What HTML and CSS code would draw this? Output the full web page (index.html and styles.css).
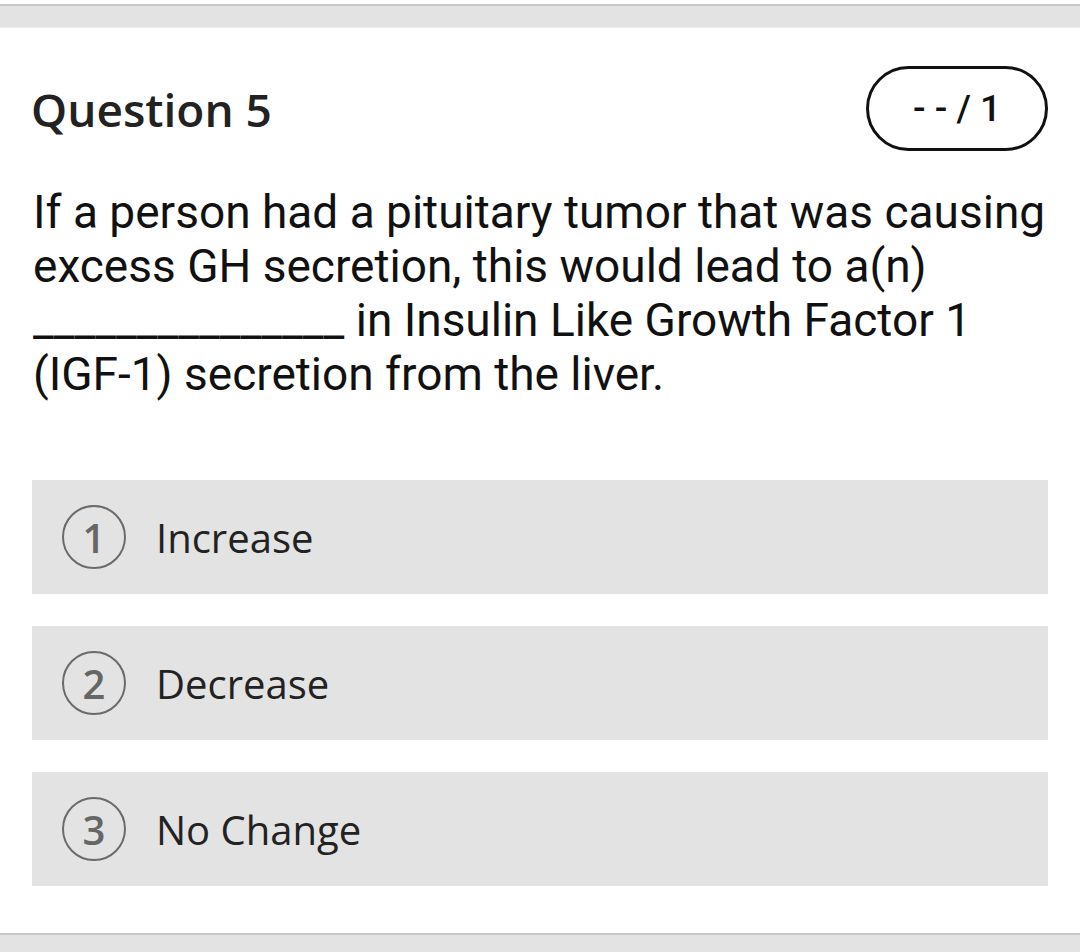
FILE: index.html
```html
<!DOCTYPE html>
<html lang="en">
<head>
  <meta charset="UTF-8">
  <title>Question 5</title>
  <link rel="stylesheet" href="styles.css">
</head>
<body>
  <div class="top-bar"></div>

  <div class="question">
    <div class="question-head">
      <h2 class="question-title">Question 5</h2>
      <div class="score">- - / 1</div>
    </div>

    <p class="question-text">If a person had a pituitary tumor that was causing excess GH secretion, this would lead to a(n) _______________ in Insulin Like Growth Factor 1 (IGF-1) secretion from the liver.</p>

    <div class="options">
      <div class="option">
        <span class="option-num">1</span>
        <span class="option-label">Increase</span>
      </div>
      <div class="option">
        <span class="option-num">2</span>
        <span class="option-label">Decrease</span>
      </div>
      <div class="option">
        <span class="option-num">3</span>
        <span class="option-label">No Change</span>
      </div>
    </div>
  </div>

  <div class="bottom-bar"></div>
</body>
</html>
```

FILE: styles.css
```css
body {
  margin: 0;
  background: #ffffff;
  color: #222222;
  font-family: 'Open Sans', sans-serif;
  width: 1080px;
  height: 952px;
  overflow: hidden;
}
.top-bar {
  margin-top: 4px;
  height: 21px;
  background: #e3e3e3;
  border-top: 2px solid #c8c8c8;
  border-bottom: 1px solid #ececec;
}
.question {
  padding: 38px 32px 0 32px;
}
.question-head {
  display: flex;
  justify-content: space-between;
  align-items: center;
}
.question-title {
  margin: 0 0 0 -1px;
  font-size: 46px;
  font-weight: 600;
  color: #222222;
}
.score {
  width: 176px;
  height: 79px;
  box-sizing: content-box;
  border: 3px solid #111111;
  border-radius: 50px;
  display: flex;
  align-items: center;
  justify-content: center;
  font-family: Roboto, sans-serif;
  font-size: 37px;
  font-weight: 500;
  color: #111111;
}
.question-text {
  margin: 34px 0 0 1px;
  font-family: Roboto, sans-serif;
  font-size: 46px;
  line-height: 54px;
  color: #111111;
}
.options {
  margin-top: 79px;
  display: flex;
  flex-direction: column;
  gap: 32px;
}
.option {
  height: 114px;
  background: #e3e3e3;
  display: flex;
  align-items: center;
  padding-left: 30px;
}
.option-num {
  width: 60px;
  height: 60px;
  border: 2px solid #6a6a6a;
  border-radius: 50%;
  display: flex;
  align-items: center;
  justify-content: center;
  font-size: 40px;
  font-weight: 600;
  color: #666666;
}
.option-label {
  margin-left: 30px;
  font-size: 40px;
  color: #222222;
}
.bottom-bar {
  margin-top: 47px;
  height: 20px;
  background: #e3e3e3;
  border-top: 2px solid #c8c8c8;
}
```
